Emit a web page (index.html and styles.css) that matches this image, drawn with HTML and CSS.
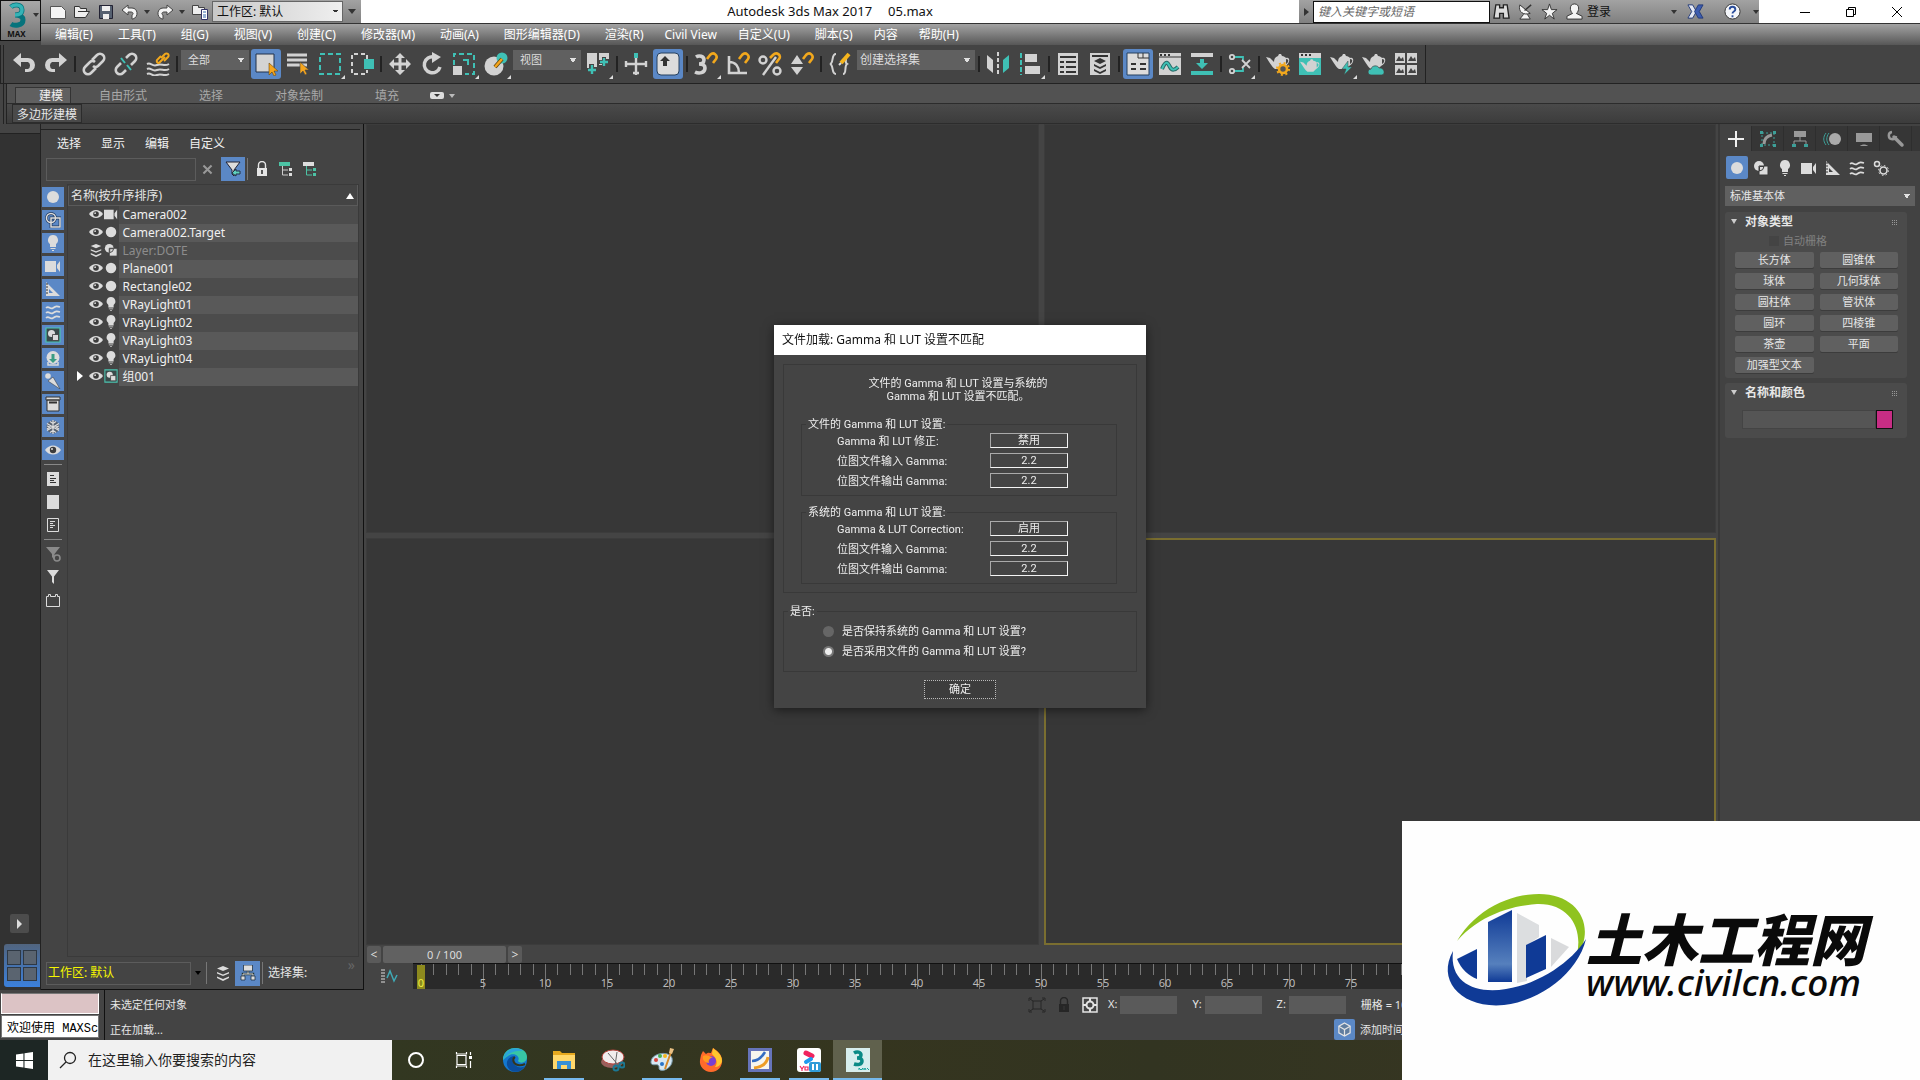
FILE: index.html
```html
<!DOCTYPE html>
<html lang="zh-CN">
<head>
<meta charset="utf-8">
<title>Autodesk 3ds Max 2017 - 05.max</title>
<link rel="stylesheet" href="styles.css">
</head>
<body>
<svg class="sprite" aria-hidden="true">
  <symbol id="undo" viewBox="0 0 24 24"><path d="M1 8l8-7v5h7a7 7 0 0 1 0 14h-3v-3h3a4 4 0 0 0 0-7H9v5z" fill="currentColor"/></symbol>
  <symbol id="redo" viewBox="0 0 24 24"><path d="M23 8l-8-7v5H8a7 7 0 0 0 0 14h3v-3H8a4 4 0 0 1 0-7h7v5z" fill="currentColor"/></symbol>
  <symbol id="link" viewBox="0 0 24 24"><g fill="none" stroke="currentColor" stroke-width="2.6"><path d="M10 8l5-5a3.8 3.8 0 0 1 6 6l-5 5a3.8 3.8 0 0 1-5 0"/><path d="M14 16l-5 5a3.8 3.8 0 0 1-6-6l5-5a3.8 3.8 0 0 1 5 0"/></g></symbol>
  <symbol id="unlink" viewBox="0 0 24 24"><g fill="none" stroke="currentColor" stroke-width="2.6"><path d="M12 6l3-3a3.8 3.8 0 0 1 6 6l-4 4"/><path d="M12 18l-3 3a3.8 3.8 0 0 1-6-6l4-4"/></g><path d="M7 6l4 5M13 13l4 5" stroke="#3fc0b5" stroke-width="2"/></symbol>
  <symbol id="bind" viewBox="0 0 24 24"><g fill="none" stroke="currentColor" stroke-width="2"><path d="M1 12c4-2 5 3 10 1s7 2 12-1M1 17c4-2 5 3 10 1s7 2 12-1M1 22c4-2 5 3 10 1s7 2 12-1"/></g><g fill="none" stroke="#f2a81d" stroke-width="2"><path d="M15 6l4-4a2 2 0 0 1 3 3l-4 4"/><path d="M19 5l-6 6a2 2 0 0 1-2-3l4-4"/></g></symbol>
  <symbol id="select" viewBox="0 0 24 24"><path d="M2 2h18v18H2z" fill="#d4d4d4" stroke="#20304a"/><path d="M15 11v12l3-3 2 4 2-1-2-4h4z" fill="#f5a51d" stroke="#6b4a10" stroke-width=".6"/></symbol>
  <symbol id="byname" viewBox="0 0 24 24"><path d="M1 3h20M1 8h20M1 13h20" stroke="currentColor" stroke-width="3"/><path d="M14 10v12l3-3 2 4 2-1-2-4h4z" fill="#f5a51d" stroke="#444" stroke-width=".6"/></symbol>
  <symbol id="region" viewBox="0 0 24 24"><path d="M2 2h20v20H2z" fill="none" stroke="#3fc0b5" stroke-width="2" stroke-dasharray="5 3"/></symbol>
  <symbol id="window" viewBox="0 0 24 24"><path d="M17 7V2H2v20h15v-4" fill="none" stroke="currentColor" stroke-width="2" stroke-dasharray="4 3"/><path d="M14 7h10v10H14z" fill="#3fc0b5"/></symbol>
  <symbol id="move" viewBox="0 0 24 24"><path d="M12 1l5 5h-3.500v4.500H18V7l5 5-5 5v-3.500h-4.500V18H17l-5 5-5-5h3.500v-4.500H6V17l-5-5 5-5v3.500h4.500V6H7z" fill="currentColor"/></symbol>
  <symbol id="rotate" viewBox="0 0 24 24"><path d="M14 5a8 8 0 1 0 6 10" fill="none" stroke="currentColor" stroke-width="3.500"/><path d="M12 0l9 5-9 6z" fill="currentColor"/></symbol>
  <symbol id="scale" viewBox="0 0 24 24"><path d="M2 13V2h20v20h-9" fill="none" stroke="#3fc0b5" stroke-width="2" stroke-dasharray="5 3"/><path d="M1 14h9v9H1z" fill="currentColor"/><path d="M11 8h5v5" fill="none" stroke="#3fc0b5" stroke-width="2"/></symbol>
  <symbol id="place" viewBox="0 0 24 24"><circle cx="10" cy="14" r="9.500" fill="currentColor"/><circle cx="18" cy="6" r="5.500" fill="#3fc0b5"/><path d="M11 15l7-8" stroke="#5b430f" stroke-width="4"/><path d="M11 15l7-8" stroke="#f5a51d" stroke-width="2.500"/></symbol>
  <symbol id="pivot" viewBox="0 0 24 24"><path d="M1 1h10v14H8v-3H3v5H1zM13 1h10v6h-4v6h-6z" fill="currentColor"/><path d="M1 1h10v11H1z" fill="currentColor"/><path d="M6 13v10M1 18h10M18 5v10M13 10h10" stroke="#444" stroke-width="4"/><path d="M6 13v9M2 18h8M18 6v8M14 10h8" stroke="#3fc0b5" stroke-width="2.400"/></symbol>
  <symbol id="manip" viewBox="0 0 24 24"><path d="M12 5v18M2 12h20M2 9v6M22 9v6M9 21h6" stroke="currentColor" stroke-width="2.400"/><path d="M10 1h4v5h-4z" fill="#3fc0b5"/></symbol>
  <symbol id="kbd" viewBox="0 0 24 24"><rect x="1" y="1" width="22" height="22" rx="4" fill="#dcdcdc" stroke="#26405f"/><path d="M9 4l5 5h-3v5H7V9H4z" fill="#333"/></symbol>
  <symbol id="snap3" viewBox="0 0 24 24"><path d="M2 5c3-2 8-1 8 3 0 3-3 4-5 4 3 0 6 1 6 4 0 5-6 6-10 4" fill="none" stroke="currentColor" stroke-width="3.600"/><path d="M13 7l3-4c4-4 8 1 6 4l-3 4" fill="none" stroke="#f2a81d" stroke-width="2.600"/></symbol>
  <symbol id="angle" viewBox="0 0 24 24"><path d="M3 4v17h18M3 10c7 0 10 5 10 11" fill="none" stroke="currentColor" stroke-width="2.600"/><path d="M13 7l3-4c4-4 8 1 6 4l-3 4" fill="none" stroke="#f2a81d" stroke-width="2.600"/></symbol>
  <symbol id="percent" viewBox="0 0 24 24"><g fill="none" stroke="currentColor" stroke-width="2.400"><circle cx="5" cy="8" r="3.500"/><circle cx="19" cy="19" r="3.500"/><path d="M5 23L18 5"/></g><path d="M12 6l3-3c4-4 9 1 6 4l-3 4" fill="none" stroke="#f2a81d" stroke-width="2.600"/></symbol>
  <symbol id="spinner" viewBox="0 0 24 24"><path d="M7 3l6 9H1zM7 23l6-8H1z" fill="currentColor"/><path d="M13 7l3-4c4-4 8 1 6 4l-3 4" fill="none" stroke="#f2a81d" stroke-width="2.600"/></symbol>
  <symbol id="namedsel" viewBox="0 0 24 24"><path d="M8 2c-5 0-2 9-6 10 4 1 1 10 6 10M15 22c4 0 1-8 4-10-2-1-1-4-1-5" fill="none" stroke="currentColor" stroke-width="2"/><path d="M13 11l8-9" stroke="#f5b51d" stroke-width="4"/><path d="M11 13l2-2" stroke="#ddd" stroke-width="2"/></symbol>
  <symbol id="mirror" viewBox="0 0 24 24"><path d="M1 3l6 5v13l-6-5z" fill="currentColor"/><path d="M12 0v24" stroke="currentColor" stroke-width="2" stroke-dasharray="4 2"/><path d="M23 3l-6 5v13l6-5z" fill="#3fc0b5"/></symbol>
  <symbol id="align" viewBox="0 0 24 24"><path d="M3 1v22" stroke="#3fc0b5" stroke-width="2" stroke-dasharray="5 2"/><path d="M7 2h12v8H7zM7 14h15v8H7z" fill="currentColor"/></symbol>
  <symbol id="layer" viewBox="0 0 24 24"><path d="M2 1h20v22H2z" fill="currentColor"/><path d="M4 5h16M4 10h4M10 10h10M4 15h4M10 15h10M4 20h4M10 20h10" stroke="#333" stroke-width="2"/></symbol>
  <symbol id="layers2" viewBox="0 0 24 24"><path d="M2 1h20v22H2z" fill="currentColor"/><path d="M4 4h16" stroke="#333" stroke-width="2"/><path d="M12 6l6 3-6 3-6-3zM6 12l6 3 6-3v2l-6 3-6-3zM6 17l6 3 6-3v2l-6 3-6-3z" fill="#333"/></symbol>
  <symbol id="ribbon" viewBox="0 0 24 24"><path d="M1 1h22v22H1z" fill="#dcdcdc" stroke="#26405f"/><path d="M12 6h11M12 1v5M17 1v5" stroke="#333"/><path d="M5 12h5M5 17h5M14 12h6M14 17h6" stroke="#333" stroke-width="2"/></symbol>
  <symbol id="curve" viewBox="0 0 24 24"><path d="M1 1h22v22H1z" fill="currentColor"/><path d="M1 5h22" stroke="#333"/><path d="M2 3h2M6 3h2M10 3h2" stroke="#333" stroke-width="2"/><path d="M4 17c4-10 6-6 8-2s5 3 8 0" fill="none" stroke="#286b68" stroke-width="4"/><path d="M4 17c4-10 6-6 8-2s5 3 8 0" fill="none" stroke="#3fc0b5" stroke-width="2"/></symbol>
  <symbol id="dope" viewBox="0 0 24 24"><path d="M1 1h22v4H1z" fill="currentColor"/><path d="M1 19h22v4H1zM10 7h4v4h4l-6 6-6-6h4z" fill="#3fc0b5"/></symbol>
  <symbol id="schem" viewBox="0 0 24 24"><g fill="none" stroke-width="1.800"><circle cx="4" cy="5" r="2.200" stroke="currentColor"/><circle cx="4" cy="19" r="2.200" stroke="currentColor"/><path d="M7 5h8v3M7 19h8v-3" stroke="#3fc0b5"/><path d="M14 8l8 8M22 8l-8 8" stroke="currentColor"/></g></symbol>
  <symbol id="pot" viewBox="0 0 24 24"><path d="M0 8l4 1 4 4c0-3 1-5 4-6l1-2h2l1 2c2 0 3 1 4 2 4-2 5 5-1 8-1 1-2 2-3 3H9c-3-2-5-6-9-12zM20 10v5c3-2 3-5 0-5z" fill="currentColor" fill-rule="evenodd"/></symbol>
  <symbol id="rsetup" viewBox="0 0 24 24"><use href="#pot" width="24" height="24" y="-3"/><circle cx="17" cy="17" r="4" fill="#555" stroke="#f2a81d" stroke-width="2.600"/><circle cx="17" cy="17" r="6" fill="none" stroke="#f2a81d" stroke-width="2" stroke-dasharray="2 2.700"/></symbol>
  <symbol id="rframe" viewBox="0 0 24 24"><path d="M1 1h22v22H1z" fill="#3fc0b5"/><path d="M1 1h22v5H1z" fill="currentColor"/><path d="M3 3h2M7 3h2M11 3h2" stroke="#333" stroke-width="2"/><use href="#pot" x="2" y="3" width="20" height="20"/></symbol>
  <symbol id="render" viewBox="0 0 24 24"><use href="#pot" width="24" height="24" y="-3"/><path d="M18 9l-6 8h4l-2 6 8-8h-4z" fill="#3fc0b5" stroke="#444" stroke-width=".5"/></symbol>
  <symbol id="cloud" viewBox="0 0 24 24"><use href="#pot" width="24" height="24" y="-3"/><path d="M9 23a3 3 0 0 1 0-6c1-4 7-4 8-1 5-1 7 6 3 7z" fill="#3fc0b5" stroke="#444" stroke-width=".7"/></symbol>
  <symbol id="gallery" viewBox="0 0 24 24"><path d="M1 1h10v10H1zM13 1h10v10H13zM1 13h10v10H1zM13 13h10v10H13z" fill="currentColor"/><path d="M2 9l3-5 2 3 2-2 1 4zM14 9l3-5 2 3 2-2 1 4zM2 21l3-5 2 3 2-2 1 4zM14 21l3-5 2 3 2-2 1 4z" fill="#444"/></symbol>

  <symbol id="s-circle" viewBox="0 0 16 16"><circle cx="8" cy="8" r="6" fill="#dcdcdc"/></symbol>
  <symbol id="s-shape" viewBox="0 0 16 16"><circle cx="6" cy="6" r="5" fill="#dcdcdc"/><path d="M6 6h9v9H6z" fill="#dcdcdc" stroke="#3a3a3a"/><path d="M6.500 11V6.500H11A5 5 0 0 1 6.500 11z" fill="#dcdcdc" stroke="#3a3a3a"/></symbol>
  <symbol id="s-shapeo" viewBox="0 0 16 16"><g fill="none" stroke="#233a5c" stroke-width="2.800"><circle cx="6" cy="6" r="4.500"/><path d="M6 6h9v9H6z"/></g><g fill="none" stroke="#dcdcdc" stroke-width="1.500"><circle cx="6" cy="6" r="4.500"/><path d="M6 6h9v9H6z"/></g></symbol>
  <symbol id="s-bulb" viewBox="0 0 16 16"><path d="M8 0a5 5 0 0 1 3 9v3H5V9a5 5 0 0 1 3-9zM5.500 13h5v1h-5zM7 15h2v1H7z" fill="#dcdcdc"/></symbol>
  <symbol id="s-cam" viewBox="0 0 16 16"><path d="M0 3h11v11H0zM12 7l3-4v11l-3-4z" fill="#dcdcdc"/></symbol>
  <symbol id="s-help" viewBox="0 0 16 16"><path d="M1 1l14 14H1zM4 8v4h4z" fill="#dcdcdc" fill-rule="evenodd"/><path d="M1 3h2M1 6h2M1 9h2M1 12h2" stroke="#333"/></symbol>
  <symbol id="s-wave" viewBox="0 0 16 16"><g fill="none" stroke="#dcdcdc" stroke-width="1.600"><path d="M1 4c3-3 4 2 7 0s4-2 7-1M1 9c3-3 4 2 7 0s4-2 7-1M1 14c3-3 4 2 7 0s4-2 7-1"/></g></symbol>
  <symbol id="s-group" viewBox="0 0 16 16"><path d="M1 1h14v14H1z" fill="#3b4a4a" stroke="#4cc3b0" stroke-width="1.200"/><circle cx="6.500" cy="6.500" r="3.500" fill="#dcdcdc"/><path d="M7.500 7.500h6v6h-6z" fill="#dcdcdc" stroke="#3a3a3a" stroke-width=".8"/></symbol>
  <symbol id="s-xref" viewBox="0 0 16 16"><circle cx="8" cy="7.500" r="6.500" fill="#dcdcdc"/><path d="M6.500 4h3v5H12l-4 4-4-4h2.500z" fill="#3a9c84"/><path d="M3 12v3h10v-3" fill="none" stroke="#dcdcdc" stroke-width="1.500"/></symbol>
  <symbol id="s-bone" viewBox="0 0 16 16"><circle cx="3" cy="3" r="2.800" fill="#dcdcdc"/><path d="M3 8l5-4 7 12z" fill="#dcdcdc" stroke="#333" stroke-width=".5"/></symbol>
  <symbol id="s-box" viewBox="0 0 16 16"><path d="M1 1h14v3H1zM2 4h12v11H2z" fill="#dcdcdc" stroke="#333"/><path d="M4 6.500h8" stroke="#333" stroke-width="2"/></symbol>
  <symbol id="s-snow" viewBox="0 0 16 16"><circle cx="8" cy="8" r="6.500" fill="#56606e"/><path d="M8 1v14M2 4.500l12 7M14 4.500l-12 7M5 2.500l3 2 3-2M5 13.500l3-2 3 2M2 7l3 1-3 2M14 7l-3 1 3 2" fill="none" stroke="#dcdcdc" stroke-width="1.200"/></symbol>
  <symbol id="s-eye" viewBox="0 0 16 16"><path d="M0 8c4-6 12-6 16 0-4 6-12 6-16 0z" fill="#dcdcdc"/><circle cx="8" cy="8" r="3.200" fill="#3c3c3c"/><circle cx="7" cy="7" r="1" fill="#dcdcdc"/></symbol>
  <symbol id="s-stack" viewBox="0 0 16 16"><path d="M8 1l6 2.500L8 6 2 3.500zM2 7l6 2.500L14 7v1.500L8 11 2 8.500zM2 11.500L8 14l6-2.500V13l-6 3-6-3z" fill="#dcdcdc"/></symbol>
  <symbol id="s-doc" viewBox="0 0 16 16"><path d="M2 1h12v14H2z" fill="#dcdcdc"/><path d="M5 4.500h4M5 7.500h6M5 9.500h4M5 11.500h6" stroke="#333"/></symbol>
  <symbol id="s-page" viewBox="0 0 16 16"><path d="M2 1h12v14H2z" fill="#dcdcdc"/></symbol>
  <symbol id="s-doco" viewBox="0 0 16 16"><path d="M2.500 1.500h11v13h-11z" fill="none" stroke="#dcdcdc"/><path d="M5 4.500h5M5 6.500h3M5 8.500h5M5 10.500h3" stroke="#dcdcdc"/></symbol>
  <symbol id="s-fung" viewBox="0 0 16 16"><path d="M1 1h14L9.500 8v6L7 11V8z" fill="#8a8a8a"/><circle cx="12" cy="12" r="3" fill="#444" stroke="#8a8a8a" stroke-width="1.600"/></symbol>
  <symbol id="s-fun" viewBox="0 0 16 16"><path d="M2 1h12L9 7.500V15l-2-2V7.500z" fill="#dcdcdc"/></symbol>
  <symbol id="s-fil" viewBox="0 0 16 16"><path d="M1 1h14L9 9v6l-2-2V9z" fill="#dcdcdc" stroke="#223"/><path d="M15 10h-4V8l-4 4 4 3v-2h4z" fill="#5fd0bd" stroke="#234"/></symbol>
  <symbol id="s-brick" viewBox="0 0 16 16"><path d="M1.500 4.500h2v-2h2v2h5v-2h2v2h2v10h-13z" fill="none" stroke="#dcdcdc"/></symbol>
  <symbol id="s-lock" viewBox="0 0 16 16"><path d="M4.500 7V4a3.500 3.500 0 0 1 7 0v3" fill="none" stroke="currentColor" stroke-width="1.400"/><path d="M3 7h10v8H3z" fill="currentColor"/><path d="M8 9v4" stroke="#333" stroke-width="1.600"/></symbol>
  <symbol id="s-treea" viewBox="0 0 16 16"><path d="M1 1h11v4H1z" fill="#4cc3a5"/><path d="M4.500 5v9H10M4.500 9H10" fill="none" stroke="#ccc"/><path d="M11 7h3v3h-3zM11 12h3v3h-3z" fill="#ddd"/></symbol>
  <symbol id="s-treeb" viewBox="0 0 16 16"><path d="M1 1h11v4H1z" fill="#ddd"/><path d="M4.500 5v9H10M4.500 9H10" fill="none" stroke="#4cc3a5"/><path d="M11 7h3v3h-3zM11 12h3v3h-3z" fill="#4cc3a5"/></symbol>
  <symbol id="s-hier" viewBox="0 0 16 16"><path d="M8 4v5M3 13V9h10v4" fill="none" stroke="#233" stroke-width="2.400"/><path d="M8 4v5M3 13V9h10v4" fill="none" stroke="#ddd"/><path d="M3.500 0h9v6h-9zM1 11h4v4H1zM11 11h4v4h-4z" fill="#ddd" stroke="#234" stroke-width=".8"/></symbol>
  <symbol id="s-gears" viewBox="0 0 16 16"><g fill="none" stroke="#dcdcdc"><circle cx="4" cy="4" r="2.500" stroke-width="1.500"/><circle cx="10.500" cy="10.500" r="3.500" stroke-width="1.600"/><circle cx="10.500" cy="10.500" r="5" stroke-dasharray="1.500 2.400"/></g></symbol>

  <symbol id="c-plus" viewBox="0 0 18 18"><path d="M9 1v16M1 9h16" stroke="#f0f0f0" stroke-width="2"/></symbol>
  <symbol id="c-mod" viewBox="0 0 18 18"><path d="M3 3h12v12H3z" fill="none" stroke="#3d9f98" stroke-dasharray="2 2"/><path d="M1 1h3v3H1zM14 1h3v3h-3zM1 14h3v3H1zM14 14h3v3h-3z" fill="#3d9f98"/><path d="M5 14c0-5 3-8 8-9" fill="none" stroke="#999" stroke-width="3"/></symbol>
  <symbol id="c-hier" viewBox="0 0 18 18"><path d="M3 1h12v6H3z" fill="#999"/><path d="M9 7v4M3 14v-3h12v3" fill="none" stroke="#999"/><path d="M1 14h4v3H1zM13 14h4v3h-4z" fill="#3d9f98"/></symbol>
  <symbol id="c-motion" viewBox="0 0 18 18"><circle cx="12" cy="9" r="6" fill="#aaa"/><path d="M6 3c-3 4-3 8 0 12M3 3c-3 4-3 8 0 12" fill="none" stroke="#3d9f98"/></symbol>
  <symbol id="c-disp" viewBox="0 0 18 18"><path d="M1 3h16v9H1zM5 16c2-2 6-2 8 0z" fill="#999"/></symbol>
  <symbol id="c-util" viewBox="0 0 18 18"><path d="M7 7l8 8" stroke="#999" stroke-width="3.500" stroke-linecap="round"/><path d="M5 2a3.600 3.600 0 1 0 4 4" fill="none" stroke="#999" stroke-width="2.500"/></symbol>
</svg>

<header class="appbar">
  <button class="appbtn" aria-label="应用程序">
    <svg width="18" height="26" viewBox="0 0 18 26"><path d="M3 5c3-3 11-3 11 3 0 4-4 5-7 5 4 0 8 1 8 5 0 6-9 6-12 4" fill="none" stroke="#07737c" stroke-width="5"/><path d="M3 5c3-3 11-3 11 3 0 4-4 5-7 5" fill="none" stroke="#35b3b6" stroke-width="3.500"/></svg>
    <span>MAX</span>
    <i class="caret"></i>
  </button>
  <div class="titlebar">
    <div class="quick">
      <button aria-label="新建"><svg viewBox="0 0 18 16"><path d="M1.500 2.500h11l4 4v8h-15z" fill="#f4f4f4" stroke="#555"/></svg></button>
      <button aria-label="打开"><svg viewBox="0 0 18 16"><path d="M1.500 13.500v-11h5l1 2h6v3h3l-4 6z" fill="#eee" stroke="#333"/><path d="M5 7.500h11" stroke="#333"/></svg></button>
      <button aria-label="保存"><svg viewBox="0 0 18 16"><path d="M2.500 1.500h13v13h-13z" fill="#556070" stroke="#223"/><path d="M5 2h8v5H5zM6 10h6v5H6z" fill="#eee"/></svg></button>
      <button aria-label="撤消"><svg viewBox="0 0 18 16"><path d="M1 6l6-5v3h4c6 0 7 9 1 11h-1v-4c2-1 1-3-1-3H7v3z" fill="#f4f4f4" stroke="#444"/></svg></button>
      <i class="caret"></i>
      <button aria-label="重做"><svg viewBox="0 0 18 16"><path d="M17 6l-6-5v3H7c-6 0-7 9-1 11h1v-4c-2-1-1-3 1-3h3v3z" fill="#f4f4f4" stroke="#444"/></svg></button>
      <i class="caret"></i>
      <button aria-label="项目"><svg viewBox="0 0 18 16"><path d="M1.500 1.500h6v2h6v7h-12z" fill="#eee" stroke="#444"/><path d="M10.500 5.500h6v10h-6z" fill="#fff" stroke="#336"/><path d="M12 8h3M12 11h3M12 13h3" stroke="#36a"/></svg></button>
      <select class="workspace" aria-label="工作区"><option>工作区: 默认</option></select>
      <i class="caret wide"></i>
    </div>
    <h1>Autodesk 3ds Max 2017<span>05.max</span></h1>
    <div class="info">
      <button class="flip" aria-label="展开"></button>
      <input type="search" placeholder="键入关键字或短语" aria-label="键入关键字或短语">
      <button aria-label="搜索"><svg viewBox="0 0 18 18"><path d="M3 2h4v3h4V2h4l2 14h-6v-5H7v5H1z" fill="#ddd" stroke="#222" stroke-width="1.400"/></svg></button>
      <button aria-label="通讯中心"><svg viewBox="0 0 18 18"><path d="M3 2c-2 8 4 11 11 9zM7 12l-4 5h11l-3-5" fill="#f4f4f4" stroke="#333"/><path d="M8 8l7-6" stroke="#333" stroke-width="1.500"/></svg></button>
      <button aria-label="收藏夹"><svg viewBox="0 0 18 18"><path d="M9 1l2 6h6l-5 4 2 6-5-4-5 4 2-6-5-4h6z" fill="#f4f4f4" stroke="#333"/></svg></button>
      <button class="login"><svg viewBox="0 0 18 18"><path d="M9 1c6 0 5 8 2 10l6 3v3H1v-3l6-3C4 9 3 1 9 1z" fill="#f4f4f4" stroke="#333"/></svg>登录</button>
      <i class="caret"></i>
      <button aria-label="交换"><svg viewBox="0 0 18 18"><path d="M1 2h5l4 7-4 7H1l4-7z" fill="#e4e8f4" stroke="#223a7a"/><path d="M17 2h-5L8 9l4 7h5l-4-7z" fill="#3d5cae" stroke="#223a7a"/></svg></button>
      <button class="help" aria-label="帮助"><svg viewBox="0 0 18 18"><circle cx="9" cy="9" r="8" fill="#f4f6fa" stroke="#333"/><path d="M6 7c0-4 6-4 6 0 0 2-3 2-3 4M9 13v2" fill="none" stroke="#2a4d9b" stroke-width="2"/></svg></button>
      <i class="caret"></i>
    </div>
    <div class="winctl">
      <button aria-label="最小化"><svg viewBox="0 0 12 12"><path d="M1 6.500h10" stroke="#000"/></svg></button>
      <button aria-label="还原"><svg viewBox="0 0 12 12"><path d="M1.500 3.500h7v7h-7zM3.500 3.500v-2h7v7h-2" fill="none" stroke="#000"/></svg></button>
      <button aria-label="关闭"><svg viewBox="0 0 12 12"><path d="M1 1l10 10M11 1L1 11" stroke="#000"/></svg></button>
    </div>
  </div>
  <nav class="menubar">
    <a href="#">编辑(E)</a><a href="#">工具(T)</a><a href="#">组(G)</a><a href="#">视图(V)</a><a href="#">创建(C)</a><a href="#">修改器(M)</a><a href="#">动画(A)</a><a href="#">图形编辑器(D)</a><a href="#">渲染(R)</a><a href="#" class="tight">Civil View</a><a href="#">自定义(U)</a><a href="#">脚本(S)</a><a href="#" class="tight">内容</a><a href="#">帮助(H)</a>
  </nav>
</header>

<div class="toolbar">
  <div class="tools">
    <button aria-label="撤消"><svg><use href="#undo"/></svg></button>
    <button aria-label="重做"><svg><use href="#redo"/></svg></button><i class="sep"></i>
    <button aria-label="链接"><svg><use href="#link"/></svg></button>
    <button aria-label="取消链接"><svg><use href="#unlink"/></svg></button>
    <button aria-label="绑定到空间扭曲"><svg><use href="#bind"/></svg></button><i class="sep"></i>
    <select aria-label="选择过滤器"><option>全部</option></select>
    <button class="on" aria-label="选择对象"><svg><use href="#select"/></svg></button>
    <button aria-label="按名称选择"><svg><use href="#byname"/></svg></button>
    <button class="fly" aria-label="选择区域"><svg><use href="#region"/></svg></button>
    <button aria-label="窗口/交叉"><svg><use href="#window"/></svg></button><i class="sep"></i>
    <button aria-label="移动"><svg><use href="#move"/></svg></button>
    <button aria-label="旋转"><svg><use href="#rotate"/></svg></button>
    <button class="fly" aria-label="缩放"><svg><use href="#scale"/></svg></button>
    <button class="fly" aria-label="放置"><svg><use href="#place"/></svg></button>
    <select aria-label="参考坐标系"><option>视图</option></select>
    <button class="fly" aria-label="轴点"><svg><use href="#pivot"/></svg></button><i class="sep"></i>
    <button aria-label="操纵"><svg><use href="#manip"/></svg></button>
    <button class="on" aria-label="键盘快捷键覆盖"><svg><use href="#kbd"/></svg></button><i class="sep"></i>
    <button class="fly" aria-label="捕捉"><svg><use href="#snap3"/></svg></button>
    <button aria-label="角度捕捉"><svg><use href="#angle"/></svg></button>
    <button aria-label="百分比捕捉"><svg><use href="#percent"/></svg></button>
    <button aria-label="微调器捕捉"><svg><use href="#spinner"/></svg></button><i class="sep"></i>
    <button aria-label="编辑命名选择集"><svg><use href="#namedsel"/></svg></button>
    <select class="long" aria-label="命名选择集"><option>创建选择集</option></select><i class="sep"></i>
    <button aria-label="镜像"><svg><use href="#mirror"/></svg></button>
    <button class="fly" aria-label="对齐"><svg><use href="#align"/></svg></button><i class="sep"></i>
    <button aria-label="场景资源管理器"><svg><use href="#layer"/></svg></button>
    <button aria-label="层资源管理器"><svg><use href="#layers2"/></svg></button><i class="sep"></i>
    <button class="on" aria-label="功能区"><svg><use href="#ribbon"/></svg></button>
    <button aria-label="曲线编辑器"><svg><use href="#curve"/></svg></button>
    <button aria-label="摄影表"><svg><use href="#dope"/></svg></button><i class="sep"></i>
    <button class="fly" aria-label="材质编辑器"><svg><use href="#schem"/></svg></button><i class="sep"></i>
    <button aria-label="渲染设置"><svg><use href="#rsetup"/></svg></button>
    <button aria-label="渲染帧窗口"><svg><use href="#rframe"/></svg></button>
    <button class="fly" aria-label="渲染产品"><svg><use href="#render"/></svg></button>
    <button aria-label="云渲染"><svg><use href="#cloud"/></svg></button>
    <button aria-label="渲染库"><svg><use href="#gallery"/></svg></button>
  </div>
</div>

<div class="ribbon">
  <nav class="tabs">
    <a href="#" class="cur">建模</a><a href="#">自由形式</a><a href="#">选择</a><a href="#">对象绘制</a><a href="#">填充</a>
    <button class="pill" aria-label="最小化功能区"><i></i></button><i class="caret lite"></i>
  </nav>
  <div class="ribbonpanel"><button>多边形建模</button></div>
</div>

<main class="work">
  <aside class="dock">
    <i class="grip"></i>
    <button class="play" aria-label="展开视口布局"></button>
    <button class="layout" aria-label="视口布局"><i></i><i></i><i></i><i></i></button>
  </aside>

  <section class="explorer">
    <nav class="exmenu"><a href="#">选择</a><a href="#">显示</a><a href="#">编辑</a><a href="#">自定义</a></nav>
    <div class="exfind">
      <input type="text" aria-label="查找">
      <button class="clear" aria-label="清除"><svg viewBox="0 0 16 16"><path d="M3 3l10 10M13 3L3 13" stroke="#999" stroke-width="2.500"/></svg></button>
      <button class="on" aria-label="过滤"><svg><use href="#s-fil"/></svg></button>
      <i class="bar"></i>
      <button aria-label="锁定"><svg><use href="#s-lock"/></svg></button>
      <button aria-label="展开"><svg><use href="#s-treea"/></svg></button>
      <button aria-label="折叠"><svg><use href="#s-treeb"/></svg></button>
    </div>
    <div class="exbody">
      <div class="filters">
        <button class="on" aria-label="几何体"><svg><use href="#s-circle"/></svg></button>
        <button class="on" aria-label="图形"><svg><use href="#s-shapeo"/></svg></button>
        <button class="on" aria-label="灯光"><svg><use href="#s-bulb"/></svg></button>
        <button class="on" aria-label="摄影机"><svg><use href="#s-cam"/></svg></button>
        <button class="on" aria-label="辅助对象"><svg><use href="#s-help"/></svg></button>
        <button class="on" aria-label="空间扭曲"><svg><use href="#s-wave"/></svg></button>
        <button class="on" aria-label="组"><svg><use href="#s-group"/></svg></button>
        <button class="on" aria-label="外部参照"><svg><use href="#s-xref"/></svg></button>
        <button class="on" aria-label="骨骼"><svg><use href="#s-bone"/></svg></button>
        <button class="on" aria-label="容器"><svg><use href="#s-box"/></svg></button>
        <button class="on" aria-label="冻结"><svg><use href="#s-snow"/></svg></button>
        <button class="on" aria-label="隐藏"><svg><use href="#s-eye"/></svg></button>
        <hr>
        <button aria-label="全部显示"><svg><use href="#s-doc"/></svg></button>
        <button aria-label="全部不显示"><svg><use href="#s-page"/></svg></button>
        <button aria-label="反转显示"><svg><use href="#s-doco"/></svg></button>
        <hr>
        <button aria-label="过滤设置"><svg><use href="#s-fung"/></svg></button>
        <button aria-label="过滤器"><svg><use href="#s-fun"/></svg></button>
        <button aria-label="选择集"><svg><use href="#s-brick"/></svg></button>
      </div>
      <div class="listwrap">
      <table class="list">
        <colgroup><col class="icons"><col></colgroup>
        <thead><tr><th colspan="2"><span>名称(按升序排序)</span><i></i></th></tr></thead>
        <tbody>
          <tr><td class="ic"><svg><use href="#s-eye"/></svg><svg><use href="#s-cam"/></svg></td><td>Camera002</td></tr>
          <tr><td class="ic"><svg><use href="#s-eye"/></svg><svg><use href="#s-circle"/></svg></td><td>Camera002.Target</td></tr>
          <tr class="dim"><td class="ic"><svg><use href="#s-stack"/></svg><svg><use href="#s-shape"/></svg></td><td>Layer:DOTE</td></tr>
          <tr><td class="ic"><svg><use href="#s-eye"/></svg><svg><use href="#s-circle"/></svg></td><td>Plane001</td></tr>
          <tr><td class="ic"><svg><use href="#s-eye"/></svg><svg><use href="#s-circle"/></svg></td><td>Rectangle02</td></tr>
          <tr><td class="ic"><svg><use href="#s-eye"/></svg><svg><use href="#s-bulb"/></svg></td><td>VRayLight01</td></tr>
          <tr><td class="ic"><svg><use href="#s-eye"/></svg><svg><use href="#s-bulb"/></svg></td><td>VRayLight02</td></tr>
          <tr><td class="ic"><svg><use href="#s-eye"/></svg><svg><use href="#s-bulb"/></svg></td><td>VRayLight03</td></tr>
          <tr><td class="ic"><svg><use href="#s-eye"/></svg><svg><use href="#s-bulb"/></svg></td><td>VRayLight04</td></tr>
          <tr><td class="ic"><i class="tri"></i><svg><use href="#s-eye"/></svg><svg><use href="#s-group"/></svg></td><td>组001</td></tr>
        </tbody>
      </table>
      </div>
    </div>
    <div class="exfoot">
      <select aria-label="工作区"><option>工作区: 默认</option></select>
      <i class="caret dark"></i><i class="bar"></i>
      <button aria-label="层"><svg><use href="#s-stack"/></svg></button>
      <button class="on" aria-label="层次"><svg><use href="#s-hier"/></svg></button>
      <i class="bar"></i>
      <span>选择集:</span><em>»</em>
    </div>
  </section>

  <section class="stage">
    <div class="views"><div></div><div></div><div></div><div class="active"></div></div>
    <div class="slider"><button>&lt;</button><button class="thumb">0 / 100</button><button>&gt;</button></div>
    <div class="track">
      <button class="mini" aria-label="迷你曲线编辑器"><svg width="18" height="14" viewBox="0 0 18 14"><path d="M1 1h4M1 4h4M1 7h4M1 10h4M1 13h4" stroke="#ddd"/><path d="M7 9l3-7 4 10 3-6" fill="none" stroke="#3fa9b5" stroke-width="1.500"/></svg></button>
      <ol class="ruler">
        <li class="now"><span>0</span></li><li><span>5</span></li><li><span>10</span></li><li><span>15</span></li><li><span>20</span></li><li><span>25</span></li><li><span>30</span></li><li><span>35</span></li><li><span>40</span></li><li><span>45</span></li><li><span>50</span></li><li><span>55</span></li><li><span>60</span></li><li><span>65</span></li><li><span>70</span></li><li><span>75</span></li><li></li><li></li><li></li><li></li>
      </ol>
    </div>
  </section>

  <aside class="command">
    <nav class="ctabs">
      <button class="cur" aria-label="创建"><svg><use href="#c-plus"/></svg></button>
      <button aria-label="修改"><svg><use href="#c-mod"/></svg></button>
      <button aria-label="层次"><svg><use href="#c-hier"/></svg></button>
      <button aria-label="运动"><svg><use href="#c-motion"/></svg></button>
      <button aria-label="显示"><svg><use href="#c-disp"/></svg></button>
      <button aria-label="实用程序"><svg><use href="#c-util"/></svg></button>
    </nav>
    <div class="cats">
      <button class="on" aria-label="几何体"><svg><use href="#s-circle"/></svg></button>
      <button aria-label="图形"><svg><use href="#s-shape"/></svg></button>
      <button aria-label="灯光"><svg><use href="#s-bulb"/></svg></button>
      <button aria-label="摄影机"><svg><use href="#s-cam"/></svg></button>
      <button aria-label="辅助对象"><svg><use href="#s-help"/></svg></button>
      <button aria-label="空间扭曲"><svg><use href="#s-wave"/></svg></button>
      <button aria-label="系统"><svg><use href="#s-gears"/></svg></button>
    </div>
    <select class="kind" aria-label="对象类别"><option>标准基本体</option></select>
    <section class="roll">
      <h2>对象类型</h2>
      <label class="auto"><input type="checkbox" disabled>自动栅格</label>
      <div class="prims">
        <button>长方体</button><button>圆锥体</button><button>球体</button><button>几何球体</button><button>圆柱体</button><button>管状体</button><button>圆环</button><button>四棱锥</button><button>茶壶</button><button>平面</button><button>加强型文本</button>
      </div>
    </section>
    <section class="roll">
      <h2>名称和颜色</h2>
      <div class="namecol"><input type="text" aria-label="名称"><button aria-label="颜色"></button></div>
    </section>
  </aside>
</main>

<footer class="status">
  <div class="script"><div class="pink"></div><input type="text" value="欢迎使用 MAXScript" aria-label="MAXScript"></div>
  <div class="msgs"><p>未选定任何对象</p><p>正在加载...</p></div>
  <div class="coords">
    <div class="xyz">
      <svg class="off" width="18" height="16" viewBox="0 0 18 16"><path d="M5 4h8v8H5zM1 4V1h3M14 1h3v3M1 12v3h3M14 15h3v-3M2 2l3 2M16 2l-3 2M2 14l3-2M16 14l-3-2" fill="none" stroke="currentColor"/></svg>
      <svg class="off" width="16" height="16"><use href="#s-lock"/></svg>
      <svg width="16" height="16" viewBox="0 0 16 16"><path d="M1 1h14v14H1z" fill="none" stroke="#e4e4e4" stroke-width="1.500"/><circle cx="8" cy="8" r="3.500" fill="none" stroke="#e4e4e4" stroke-width="2"/><path d="M8 1v3M8 12v3M1 8h3M12 8h3" stroke="#e4e4e4" stroke-width="2"/></svg>
      <label>X:<input type="text"></label><label>Y:<input type="text"></label><label>Z:<input type="text"></label>
      <span>栅格 = 10.0</span>
    </div>
    <div class="tag"><button aria-label="时间标记"><svg viewBox="0 0 16 16"><path d="M8 1l6 3.500v7L8 15l-6-3.500v-7z" fill="#607d9f" stroke="#e4e4e4" stroke-width="1.300"/><path d="M2 4.500L8 8l6-3.500M8 8v7" fill="none" stroke="#e4e4e4" stroke-width="1.300"/></svg></button><span>添加时间标记</span></div>
  </div>
</footer>

<div class="taskbar">
  <button class="start" aria-label="开始"><svg width="16" height="16" viewBox="0 0 16 16"><path d="M0 2.300l7-1v6.200H0zM8 1.200L16 0v7.500H8zM0 8.500h7v6.200l-7-1zM8 8.500h8V16l-8-1.200z" fill="#fff"/></svg></button>
  <label class="find"><svg width="18" height="18" viewBox="0 0 18 18"><circle cx="11" cy="7" r="5.500" fill="none" stroke="#222" stroke-width="1.300"/><path d="M7 11l-6 6" stroke="#222" stroke-width="1.300"/></svg><input type="search" placeholder="在这里输入你要搜索的内容" aria-label="在这里输入你要搜索的内容"></label>
  <button aria-label="Cortana"><svg viewBox="0 0 24 24"><circle cx="12" cy="12" r="7" fill="none" stroke="#fff" stroke-width="2"/></svg></button>
  <button class="tv" aria-label="任务视图"><svg viewBox="0 0 24 24"><path d="M5 7.500h9v9H5zM4.500 4v2h10V4M4.500 20v-2h10v2M18.500 4v3M18.500 13v7" fill="none" stroke="#fff" stroke-width="1.200"/><path d="M17 8h3v3h-3z" fill="#fff"/></svg></button>
  <button class="app" aria-label="Edge"><svg viewBox="0 0 24 24"><circle cx="12" cy="12" r="12" fill="#1478cf"/><path d="M0 12C0-4 24-3 24 9c0 6-7 7-9 4 3-5-5-9-10-5-3 2-4 3-5 4z" fill="#37c5a5"/><path d="M0 12C1 1 14-3 20 3 12 2 5 5 0 12z" fill="#2aa3dc"/><path d="M7 22c-6-5-3-14 5-14-4 3-2 9 3 11 3 1 6 0 7-1-3 5-9 8-15 4z" fill="#0b4d9c"/><path d="M12 9c-3 2-2 7 3 8 3 1 5 0 7-1" fill="none" stroke="#32351f" stroke-width="2"/></svg></button>
  <button class="app run" aria-label="文件资源管理器"><svg viewBox="0 0 24 24"><path d="M1 3h7l2 2h13v16H1z" fill="#e6a91f"/><path d="M1 7h22v14H1z" fill="#ffd86b"/><path d="M5 21v-8h14v8h-4v-4H9v4z" fill="#3690d6"/></svg></button>
  <button class="app" aria-label="截图工具"><svg viewBox="0 0 24 24"><ellipse cx="11" cy="14" rx="11" ry="6" fill="#9b5f5c"/><ellipse cx="12" cy="9" rx="11" ry="7" fill="#f1eded" stroke="#b8443f"/><path d="M7 5l11 13M16 4l-2 14" stroke="#666"/><g fill="none" stroke="#1b7894" stroke-width="2"><circle cx="15" cy="20" r="2.500"/><circle cx="21" cy="17" r="2.500"/></g></svg></button>
  <button class="app run" aria-label="画图"><svg viewBox="0 0 24 24"><path d="M1 15C0 5 19 2 22 10c2 8-7 14-12 12-2-1 0-4-2-5s-6 1-7-2z" fill="#d7e8f4" stroke="#79a"/><circle cx="6" cy="12" r="2" fill="#d9443b"/><circle cx="10" cy="8" r="2" fill="#4caf50"/><circle cx="15" cy="8" r="2" fill="#f5b51d"/><circle cx="12" cy="16" r="2" fill="#2a74c9"/><path d="M15 21L21 4" stroke="#d68a2c" stroke-width="2"/><path d="M19 5l1-5 4 1-2 5z" fill="#e9c083"/></svg></button>
  <button class="app" aria-label="Firefox"><svg viewBox="0 0 24 24"><path d="M2 7l2-4 3 3c2-2 4-1 5-1l2-5c3 2 8 5 9 11 1 7-4 13-11 13S0 18 1 12z" fill="#ff6a2b"/><path d="M14 0c3 3 9 6 9 13-1 5-5 6-7 6 4-5 0-10-3-13z" fill="#ffc72e"/><circle cx="12" cy="13" r="5" fill="#7a3fd1"/><path d="M4 8c4-2 6 1 10 1-3 1-5 3-4 6-4 0-7-3-6-7z" fill="#ff9a1f"/></svg></button>
  <button class="app run" aria-label="绘图"><svg viewBox="0 0 24 24"><path d="M0 0h24v24H0z" fill="#6674ba"/><path d="M3 3h18v18H3z" fill="#f7f5ee"/><path d="M4 13c6 0 10-4 13-9" fill="none" stroke="#346cc2" stroke-width="2.500"/><path d="M6 20c8-1 13-5 14-11" fill="none" stroke="#ed9d27" stroke-width="3"/></svg></button>
  <button class="app run" aria-label="录屏"><svg viewBox="0 0 24 24"><rect width="24" height="24" rx="3" fill="#fff"/><path d="M9 5l6 3" stroke="#f0245e" stroke-width="5" stroke-linecap="round"/><path d="M9 14l5-3" stroke="#1f9bf0" stroke-width="4" stroke-linecap="round"/><path d="M3 18l2 3 2-3M5 21v2M8 19h3v3H8z" fill="none" stroke="#f0245e" stroke-width="1.200"/><rect x="12" y="14" width="12" height="10" rx="2" fill="#2f9bd8"/><path d="M16 16v6M20 16v6" stroke="#fff" stroke-width="2"/></svg></button>
  <button class="app run cur" aria-label="3ds Max"><svg viewBox="0 0 24 24"><path d="M0 0h24v24H0z" fill="#d7eeee"/><path d="M8 5c3-2 7-1 7 2 0 2-2 3-4 3 3 0 5 1 5 3 0 4-5 4-8 3" fill="none" stroke="#0b8a86" stroke-width="3.500"/><path d="M13 22v-2l2 2 2-2v2M18 22l1-2 1 2M21 20l2 2" fill="none" stroke="#19a39b"/></svg></button>
</div>

<div class="modal">
  <form class="dialog" role="dialog" aria-labelledby="dt">
    <h2 id="dt">文件加载: Gamma 和 LUT 设置不匹配</h2>
    <div class="dbody">
      <div class="frame">
        <p>文件的 Gamma 和 LUT 设置与系统的<br>Gamma 和 LUT 设置不匹配。</p>
        <fieldset>
          <legend>文件的 Gamma 和 LUT 设置:</legend>
          <dl><dt>Gamma 和 LUT 修正:</dt><dd>禁用</dd><dt>位图文件输入 Gamma:</dt><dd>2.2</dd><dt>位图文件输出 Gamma:</dt><dd>2.2</dd></dl>
        </fieldset>
        <fieldset>
          <legend>系统的 Gamma 和 LUT 设置:</legend>
          <dl><dt>Gamma &amp; LUT Correction:</dt><dd>启用</dd><dt>位图文件输入 Gamma:</dt><dd>2.2</dd><dt>位图文件输出 Gamma:</dt><dd>2.2</dd></dl>
        </fieldset>
      </div>
      <fieldset class="choice">
        <legend>是否:</legend>
        <label><input type="radio" name="g">是否保持系统的 Gamma 和 LUT 设置?</label>
        <label><input type="radio" name="g" checked>是否采用文件的 Gamma 和 LUT 设置?</label>
      </fieldset>
      <button type="button" class="ok">确定</button>
    </div>
  </form>
</div>

<div class="brand">
  <svg class="mark" width="184" height="259" viewBox="2 0 184 259">
    <defs><linearGradient id="bl" x1="0" y1="0" x2="0" y2="1"><stop offset="0" stop-color="#0f3a96"/><stop offset=".75" stop-color="#5680bd"/><stop offset="1" stop-color="#0f3a96"/></linearGradient></defs>
    <path d="M57 120C76 88 110 73 139 73c34 0 52 24 44 50l-6 10c6-26-8-51-40-50-28 2-58 12-80 37z" fill="#8fc31f"/>
    <path d="M53 130c-4 33 24 43 53 38 34-5 66-28 80-50-8 34-46 62-82 66-42 4-68-24-51-54z" fill="#0f3a96"/>
    <path d="M57 138l20-10v30c-8-3-16-10-20-20z" fill="#0f3a96"/>
    <path d="M88 101l24-12v72H88z" fill="url(#bl)"/>
    <path d="M117 92l22 12v12l-12 8v36l-10 2z" fill="#dcdee0"/>
    <path d="M126 124l20-10v34l-20 9z" fill="#0f3a96"/>
    <path d="M151 117l18 9-18 20z" fill="#d9dadc"/>
  </svg>
  <div class="words"><strong>土木工程网</strong><span>www.civilcn.com</span></div>
</div>
</body>
</html>
```
FILE: styles.css
```css
* { box-sizing: border-box; }
html, body { height: 100%; }
body {
  margin: 0;
  display: flex;
  flex-direction: column;
  overflow: hidden;
  background: #444;
  color: #e6e6e6;
  font: 12px/16px "Noto Sans", "Noto Sans CJK SC", sans-serif;
}
h1, h2, p, dl, dd, ol { margin: 0; padding: 0; font-size: inherit; font-weight: normal; }
a { color: inherit; text-decoration: none; }
button, input, select { font: inherit; color: inherit; margin: 0; padding: 0; border: 0; border-radius: 0; background: none; }
button { display: flex; align-items: center; justify-content: center; flex: none; }
select, input { appearance: none; min-width: 0; }
svg { display: block; flex: none; }
.sprite { position: absolute; width: 0; height: 0; }
.on { background: #5b88c6; }
.caret { width: 0; border: 3px solid transparent; border-top: 4px solid #333; border-bottom: 0; flex: none; }
.caret.lite { border-top-color: #bbb; }
.caret.dark { border-top-color: #000; }

/* title and menu */
.appbar { display: grid; grid-template: 24px 21px / 41px 1fr; flex: none; }
.appbtn { grid-row: 1 / 3; height: 41px; border: 1px solid #111; background: linear-gradient(#a8a8a8, #777); color: #111; display: grid; grid-template: 27px 12px / 1fr 8px; justify-items: center; }
.appbtn span { font-size: 8px; line-height: 10px; font-weight: 700; grid-area: 2 / 1; }
.appbtn .caret { grid-area: 1 / 2; }
.appbtn svg { grid-area: 1 / 1; }
.titlebar { display: flex; background: #fff; border-bottom: 1px solid #333; color: #111; }
.quick, .info { display: flex; align-items: center; background: linear-gradient(#a2a2a2, #808080); }
.quick { width: 320px; padding-left: 5px; }
.quick button { width: 24px; }
.quick svg { width: 18px; height: 16px; }
.quick .caret { margin: 0 3px 0 2px; }
.workspace { flex: 1; height: 21px; border: 1px solid #666; background: linear-gradient(to bottom right, #333 50%, transparent 50%) right 4px center / 3px 3px no-repeat, linear-gradient(to bottom left, #333 50%, transparent 50%) right 7px center / 3px 3px no-repeat, linear-gradient(90deg, #c8c8c8, #efefef); padding-left: 4px; }
.quick .caret.wide { margin: 0 5px; border-width: 5px 4px 0; }
.titlebar h1 { flex: 1; text-align: center; font-size: 13px; line-height: 23px; white-space: nowrap; }
.titlebar h1 span { margin-left: 16px; }
.info { width: 460px; }
.info svg { width: 17px; height: 17px; }
.info button { width: 24px; }
.info .flip { width: 14px; }
.flip::before { content: ""; border: 4px solid transparent; border-left: 5px solid #333; border-right: 0; }
.info input { width: 180px; height: 22px; background: #fff; border: 1px solid #111; padding-left: 4px; font-style: italic; }
.info input::placeholder { color: #666; opacity: 1; }
.info .login { width: auto; gap: 4px; padding-left: 4px; margin-right: 60px; }
.info .caret { margin-right: 6px; }
.info .help { width: 46px; padding-left: 4px; }
.info .help + .caret { margin: 0; }
.winctl { display: flex; padding-left: 23px; }
.winctl button { width: 46px; }
.winctl svg { width: 12px; height: 12px; }
.menubar { display: flex; align-items: center; gap: 1px; grid-column: 2; padding-left: 2px; background: linear-gradient(#a3a3a3, #575757); color: #fff; }
.menubar a { padding: 0 12px; white-space: nowrap; }
.menubar .tight { padding: 0 8px; }

/* main toolbar */
.toolbar { height: 39px; flex: none; background: #444; border-bottom: 1px solid #222; display: flex; }
.tools { display: flex; align-items: center; padding: 0 3px 0 4px; border-right: 1px solid #222; border-left: 4px double #222; color: #d2d2d2; }
.tools button { width: 30px; height: 30px; margin: 0 1px; border-radius: 3px; position: relative; }
.tools svg { width: 24px; height: 24px; }
.tools .sep { width: 2px; height: 16px; margin: 0 2px; background: #222; }
.tools .fly::after { content: ""; position: absolute; right: 0; bottom: 0; border: 2px solid #ddd; border-top-color: transparent; border-left-color: transparent; }
.tools select { width: 68px; height: 20px; margin: 5px 1px 0; align-self: flex-start; padding-left: 7px; font-size: 11px; color: #ddd; }
.tools select, .kind { background: linear-gradient(to bottom right, #e0e0e0 50%, transparent 50%) right 5px center / 3px 5px no-repeat, linear-gradient(to bottom left, #e0e0e0 50%, transparent 50%) right 8px center / 3px 5px no-repeat, #606060; }
.tools .long { width: 118px; padding-left: 3px; font-size: 12px; }

/* ribbon */
.ribbon { flex: none; border-left: 4px double #222; margin-left: 3px; }
.tabs { height: 20px; display: flex; align-items: flex-end; background: #525252; border-bottom: 1px solid #2c2c2c; padding-left: 8px; color: #a8a8a8; }
.tabs a { padding: 0 26px; line-height: 14px; }
.tabs .cur { border: 1px solid #333; border-bottom: 0; padding: 1px 7px 0 23px; margin-right: 2px; background: #606060; color: #eee; }
.pill { width: 14px; height: 7px; background: #ddd; border-radius: 2px; margin: 0 5px 4px; }
.pill i { border: 3px solid transparent; border-top-color: #333; border-bottom: 0; }
.tabs .caret { margin-bottom: 5px; }
.ribbonpanel { height: 20px; background: linear-gradient(#4a4a4a, #3c3c3c); border-bottom: 1px solid #2c2c2c; padding-left: 5px; }
.ribbonpanel button { height: 19px; border: 1px solid #2c2c2c; padding: 2px 4px 0; background: #4a4a4a; }

/* work area */
.work { flex: 1; min-height: 0; display: flex; }
.dock { width: 41px; flex: none; background: #323232; border-right: 1px solid #222; display: flex; flex-direction: column; }
.grip { height: 10px; background: #444; border-bottom: 1px solid #222; margin-bottom: auto; }
.play { width: 19px; height: 19px; margin: 0 10px 11px; background: #4c4c4c; border-radius: 2px; }
.play::before { content: ""; border: 5px solid transparent; border-left-color: #ddd; border-right: 0; }
.layout { height: 43px; margin: 0 0 3px 4px; padding: 6px 3px; display: grid; grid-template: 1fr 1fr / 1fr 1fr; gap: 2px; background: linear-gradient(#51647e, #3b80dc); border-radius: 3px 0 0 3px; }
.layout i { align-self: stretch; justify-self: stretch; border: 1px solid #2e3844; background: #5a6470; }
.explorer { width: 323px; flex: none; display: flex; flex-direction: column; border-right: 1px solid #111; border-bottom: 1px solid #111; background: #444; }
.exmenu { display: flex; gap: 20px; padding: 6px 16px 0; margin: 5px 3px 0 0; border-top: 1px solid #222; height: 28px; color: #f0f0f0; }
.exfind { display: flex; align-items: center; height: 24px; padding-left: 5px; margin-bottom: 3px; }
.exfind input { width: 150px; height: 23px; border: 1px solid #5c5c5c; }
.exfind button { width: 24px; height: 24px; }
.exfind svg, .exfoot svg { width: 16px; height: 16px; }
.exfind .clear { width: 23px; margin-right: 2px; }
.exfind .clear svg { width: 13px; height: 13px; }
.bar { width: 1px; height: 22px; background: #777; margin: 0 2px; }
.exbody { flex: 1; min-height: 0; display: flex; gap: 3px; }
.filters { width: 22px; margin-left: 1px; padding-top: 3px; display: flex; flex-direction: column; gap: 3px; flex: none; }
.filters button { width: 22px; height: 20px; }
.filters svg { width: 16px; height: 16px; }
.filters hr { width: 18px; margin: 1px auto; border: 0; border-top: 1px solid #888; }
.listwrap { flex: 1; margin-right: 4px; border: 1px solid #3a3a3a; }
.list { width: 100%; border-collapse: collapse; table-layout: fixed; }
.list .icons { width: 50px; }
.list th { height: 20px; padding: 0 3px 0 2px; text-align: left; font-weight: normal; border: 1px solid #5a5a5a; border-top-color: #444; }
.list th span { float: left; line-height: 15px; }
.list th i { float: right; margin-top: 5px; border: 4px solid transparent; border-bottom: 6px solid #fff; border-top: 0; }
.list td { height: 18px; padding: 0 0 0 4px; background: #4c4c4c; color: #f0f0f0; line-height: 17px; }
.list tr:nth-child(even) td { background: #595959; }
.list tr.dim td { color: #8c8c8c; }
.list tr td.ic, .list tr:nth-child(even) td.ic { background: none; padding: 0; text-align: right; white-space: nowrap; font-size: 0; }
.list .ic svg { display: inline-block; width: 14px; height: 14px; vertical-align: middle; margin-right: 1px; }
.tri { display: inline-block; vertical-align: middle; border: 5px solid transparent; border-left: 6px solid #fff; border-right: 0; margin-right: 6px; }
.exfoot { height: 32px; flex: none; display: flex; align-items: center; padding-left: 5px; }
.exfoot select { width: 145px; height: 23px; border: 1px solid #5c5c5c; color: #f6f600; padding-left: 1px; margin-right: 4px; }
.exfoot .bar { margin: 0 3px 0 5px; }
.exfoot button { width: 25px; height: 25px; }
.exfoot .on + .bar { margin: 0 5px 0 2px; }
.exfoot em { margin-left: auto; padding-right: 8px; color: #666; font-size: 14px; align-self: flex-start; font-style: normal; }

/* viewports and time line */
.stage { flex: 1; min-width: 0; display: flex; flex-direction: column; padding-left: 1px; }
.views { flex: 1; display: grid; grid-template: 409fr 407fr / 1fr 1fr; gap: 5px; padding: 0 2px 0 1px; }
.views div { background: #373737; border: 1px solid #3c3c3c; }
.views .active { border: 2px solid #7a6e30; }
.slider { height: 18px; padding: 1px 2px 0; display: flex; gap: 2px; color: #ddd; flex: none; }
.slider button { width: 14px; height: 17px; background: #5a5a5a; border-radius: 2px; }
.slider .thumb { width: 123px; background: #616161; font-size: 11px; }
.track { height: 27px; display: flex; flex: none; padding-bottom: 1px; }
.mini { width: 48px; }
.ruler { flex: 1; display: flex; list-style: none; background: #2a2a2a; border-top: 1px solid #111; padding: 0 57px 0 8px; color: #bbb; }
.ruler li { flex: 1; display: flex; align-items: flex-end; background: linear-gradient(#777, #777) 0 0 / 1px 100% no-repeat, repeating-linear-gradient(90deg, #777 0 1px, transparent 1px 20%) 0 0 / 100% 11px no-repeat; }
.ruler span { width: 0; display: flex; justify-content: center; font-size: 11px; line-height: 13px; }
.ruler .now span { width: 8px; height: 24px; margin-left: -4px; align-items: flex-end; background: #8d8a1e; color: #f0ee40; }

/* command panel */
.command { width: 202px; flex: none; background: #424242; border-left: 2px solid #383838; padding-top: 2px; }
.ctabs { display: flex; background: #363636; height: 25px; }
.ctabs button { flex: 0 0 32px; border-right: 1px solid #2e2e2e; }
.ctabs .cur { background: #424242; }
.ctabs svg { width: 18px; height: 18px; }
.cats { display: flex; gap: 2px; padding: 5px 5px 7px 6px; }
.cats button { width: 22px; height: 23px; border-radius: 2px; }
.cats svg { width: 16px; height: 16px; }
.kind { display: block; width: 190px; height: 20px; margin: 0 0 6px 5px; padding-left: 5px; font-size: 11px; }
.roll { margin: 0 13px 5px 5px; background: #4b4b4b; border-radius: 3px; padding: 1px 9px 5px 10px; font-size: 11px; }
.roll h2 { font-size: 12px; font-weight: 700; line-height: 17px; display: flex; align-items: center; gap: 8px; margin-left: -4px; }
.roll h2::before { content: ""; border: 3px solid transparent; border-top: 5px solid #ccc; border-bottom: 0; }
.roll h2::after { content: ""; margin-left: auto; width: 6px; height: 6px; background: repeating-linear-gradient(#4b4b4b 0 1px, transparent 1px 2px), repeating-linear-gradient(90deg, #999 0 1px, #4b4b4b 1px 2px); }
.auto { display: flex; align-items: center; gap: 4px; padding-left: 34px; height: 22px; color: #808080; }
.auto input { width: 10px; height: 10px; background: #444; }
.prims { display: grid; grid-template-columns: 1fr 1fr; gap: 5px 6px; }
.prims button { height: 16px; background: #606060; border-radius: 2px; box-shadow: 0 1px 0 #3c3c3c; }
.namecol { display: flex; padding: 9px 5px 4px 7px; }
.namecol input { flex: 1; height: 19px; background: #555; border: 1px solid #444; }
.namecol button { width: 17px; height: 19px; background: #c72d84; border: 1px solid #111; }

/* status bar */
.status { height: 50px; flex: none; display: grid; grid-template-columns: 105px 923fr 892fr; background: #444; font-size: 11px; white-space: nowrap; }
.script { padding: 3px 5px 2px 1px; border-right: 1px solid #111; }
.pink { height: 21px; background: #dcc3c5; border: 1px solid #fff; border-top-color: #777; margin-bottom: 1px; }
.script input { width: 98px; height: 23px; background: #fff; color: #000; border: 1px solid #777; padding-left: 5px; font: 12px "Liberation Mono", "Noto Sans CJK SC", monospace; }
.msgs { padding: 7px 5px; display: grid; gap: 9px; align-content: start; }
.coords { padding-top: 6px; }
.xyz { display: flex; align-items: center; height: 18px; }
.xyz svg { margin-right: 10px; }
.xyz .off { color: #262626; }
.xyz label { display: flex; gap: 3px; margin-right: 15px; }
.xyz input { width: 57px; height: 18px; background: #5a5a5a; }
.tag { display: flex; align-items: center; padding: 5px 0 0 306px; gap: 5px; }
.tag button { width: 21px; height: 21px; background: #5b88c6; border-radius: 2px; }
.tag svg { width: 15px; height: 15px; }

/* Windows taskbar */
.taskbar { height: 40px; flex: none; display: flex; background: linear-gradient(90deg, #1e2725 0 2%, #323721 20%, #35351f 45%, #323421 60%, #3b3822); }
.taskbar button { width: 48px; height: 40px; }
.taskbar button svg { width: 24px; height: 24px; }
.taskbar .start { background: #1d2624; }
.taskbar .start svg { width: 17px; height: 17px; }
.find { width: 344px; display: flex; align-items: center; gap: 11px; padding-left: 11px; background: #f1f1f1; color: #222; font-size: 14px; }
.find input { flex: 1; }
.find input::placeholder { color: #222; opacity: 1; }
.tv { margin-right: 2px; }
.taskbar .app { width: 49px; border-top: 2px solid transparent; border-bottom: 2px solid transparent; }
.taskbar .run { background: linear-gradient(#76b9ed, #76b9ed) center bottom / 40px 2px no-repeat border-box; }
.taskbar .cur { background: #60614d; border-color: #60614d #60614d #76b9ed; }

/* modal dialog */
.modal { position: fixed; inset: 0 0 48px; display: grid; place-items: center; }
.dialog { width: 372px; background: #444; box-shadow: 0 2px 10px #0008; font: 11px/13px Roboto, "Noto Sans CJK SC", sans-serif; color: #eee; }
.dialog h2 { background: #fff; color: #111; font: 12px/30px "Noto Sans", "Noto Sans CJK SC", sans-serif; padding-left: 8px; }
.dbody { padding: 9px; display: flex; flex-direction: column; }
.frame { border: 1px solid #393939; padding: 12px 19px 8px 17px; }
.frame p { text-align: center; margin-bottom: 15px; padding-right: 2px; }
fieldset { margin: 0; padding: 1px 0 7px; border: 1px solid #393939; min-width: 0; }
.frame fieldset + fieldset { margin-top: 10px; }
legend { margin-left: 4px; padding: 0 2px; line-height: 14px; }
dl { display: grid; grid-template-columns: 153px 78px; grid-auto-rows: 15px; row-gap: 5px; padding-left: 35px; line-height: 17px; }
dd { line-height: 13px; border: 1px solid #f4f4f4; border-left-color: #aaa; border-top-color: #aaa; text-align: center; }
.choice { margin-top: 12px; padding: 3px 0 9px; }
.choice label { display: flex; align-items: center; height: 20px; gap: 8px; padding-left: 39px; }
.choice input { width: 11px; height: 11px; border-radius: 50%; background: #666; }
.choice input:checked { background: radial-gradient(#eee 3px, #777 4px); }
.ok { align-self: center; width: 72px; height: 19px; margin-top: 8px; border: 1px dotted #bbb; background: #3c3c3c; }

/* site mark over the corner */
.brand { position: fixed; right: 0; bottom: 0; width: 518px; height: 259px; background: #fefefe; display: flex; color: #0a0a0a; }
.words { display: flex; flex-direction: column; justify-content: center; padding-top: 8px; font-style: italic; white-space: nowrap; }
.words strong { font: italic 900 56px/54px "Noto Sans CJK SC", sans-serif; }
.words span { font: italic 500 37px/36px "Noto Sans", sans-serif; }
```
